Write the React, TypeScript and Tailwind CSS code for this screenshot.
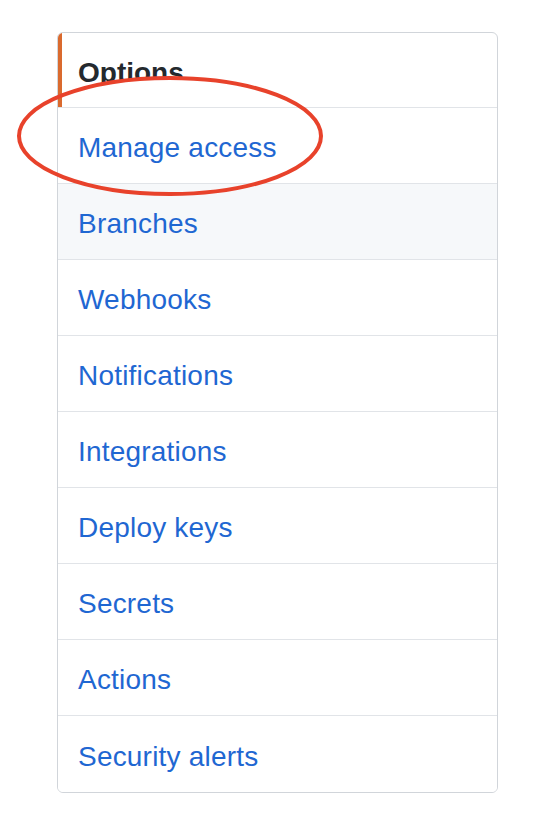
const items = [
  "Manage access",
  "Branches",
  "Webhooks",
  "Notifications",
  "Integrations",
  "Deploy keys",
  "Secrets",
  "Actions",
  "Security alerts",
];

export default function App() {
  return (
    <div className="relative min-h-[816px] w-[546px] bg-white pt-[32px] pl-[57px] font-['Liberation_Sans',Arial,sans-serif]">
      <nav className="w-[441px] rounded-[6px] border border-[#d1d5da] bg-white overflow-hidden">
        <div className="relative flex h-[75px] items-center border-b border-[#e1e4e8] pl-[20px] pt-[5px] text-[28px] font-bold text-[#24292e]">
          <span className="absolute left-0 top-0 h-[74px] w-[4px] bg-[#da6a2e]" />
          Options
        </div>
        {items.map((label, i) => (
          <a
            key={label}
            href="#"
            className={
              "flex h-[76px] items-center pl-[20px] pt-[5px] text-[28px] tracking-[0.2px] text-[#1f67d2] " +
              (i < items.length - 1 ? "border-b border-[#e1e4e8] " : "") +
              (label === "Branches" ? "bg-[#f6f8fa]" : "bg-white")
            }
          >
            {label}
          </a>
        ))}
      </nav>

      {/* annotation */}
      <svg className="pointer-events-none absolute left-0 top-0" width="546" height="816">
        <defs>
          <clipPath id="hdr">
            <rect x="62" y="0" width="440" height="106" />
          </clipPath>
        </defs>
        <ellipse cx="170" cy="136" rx="151" ry="58" fill="#fff" clipPath="url(#hdr)" />
        <ellipse cx="170" cy="136" rx="151" ry="58" fill="none" stroke="#e8422b" strokeWidth="4" />
      </svg>
    </div>
  );
}
